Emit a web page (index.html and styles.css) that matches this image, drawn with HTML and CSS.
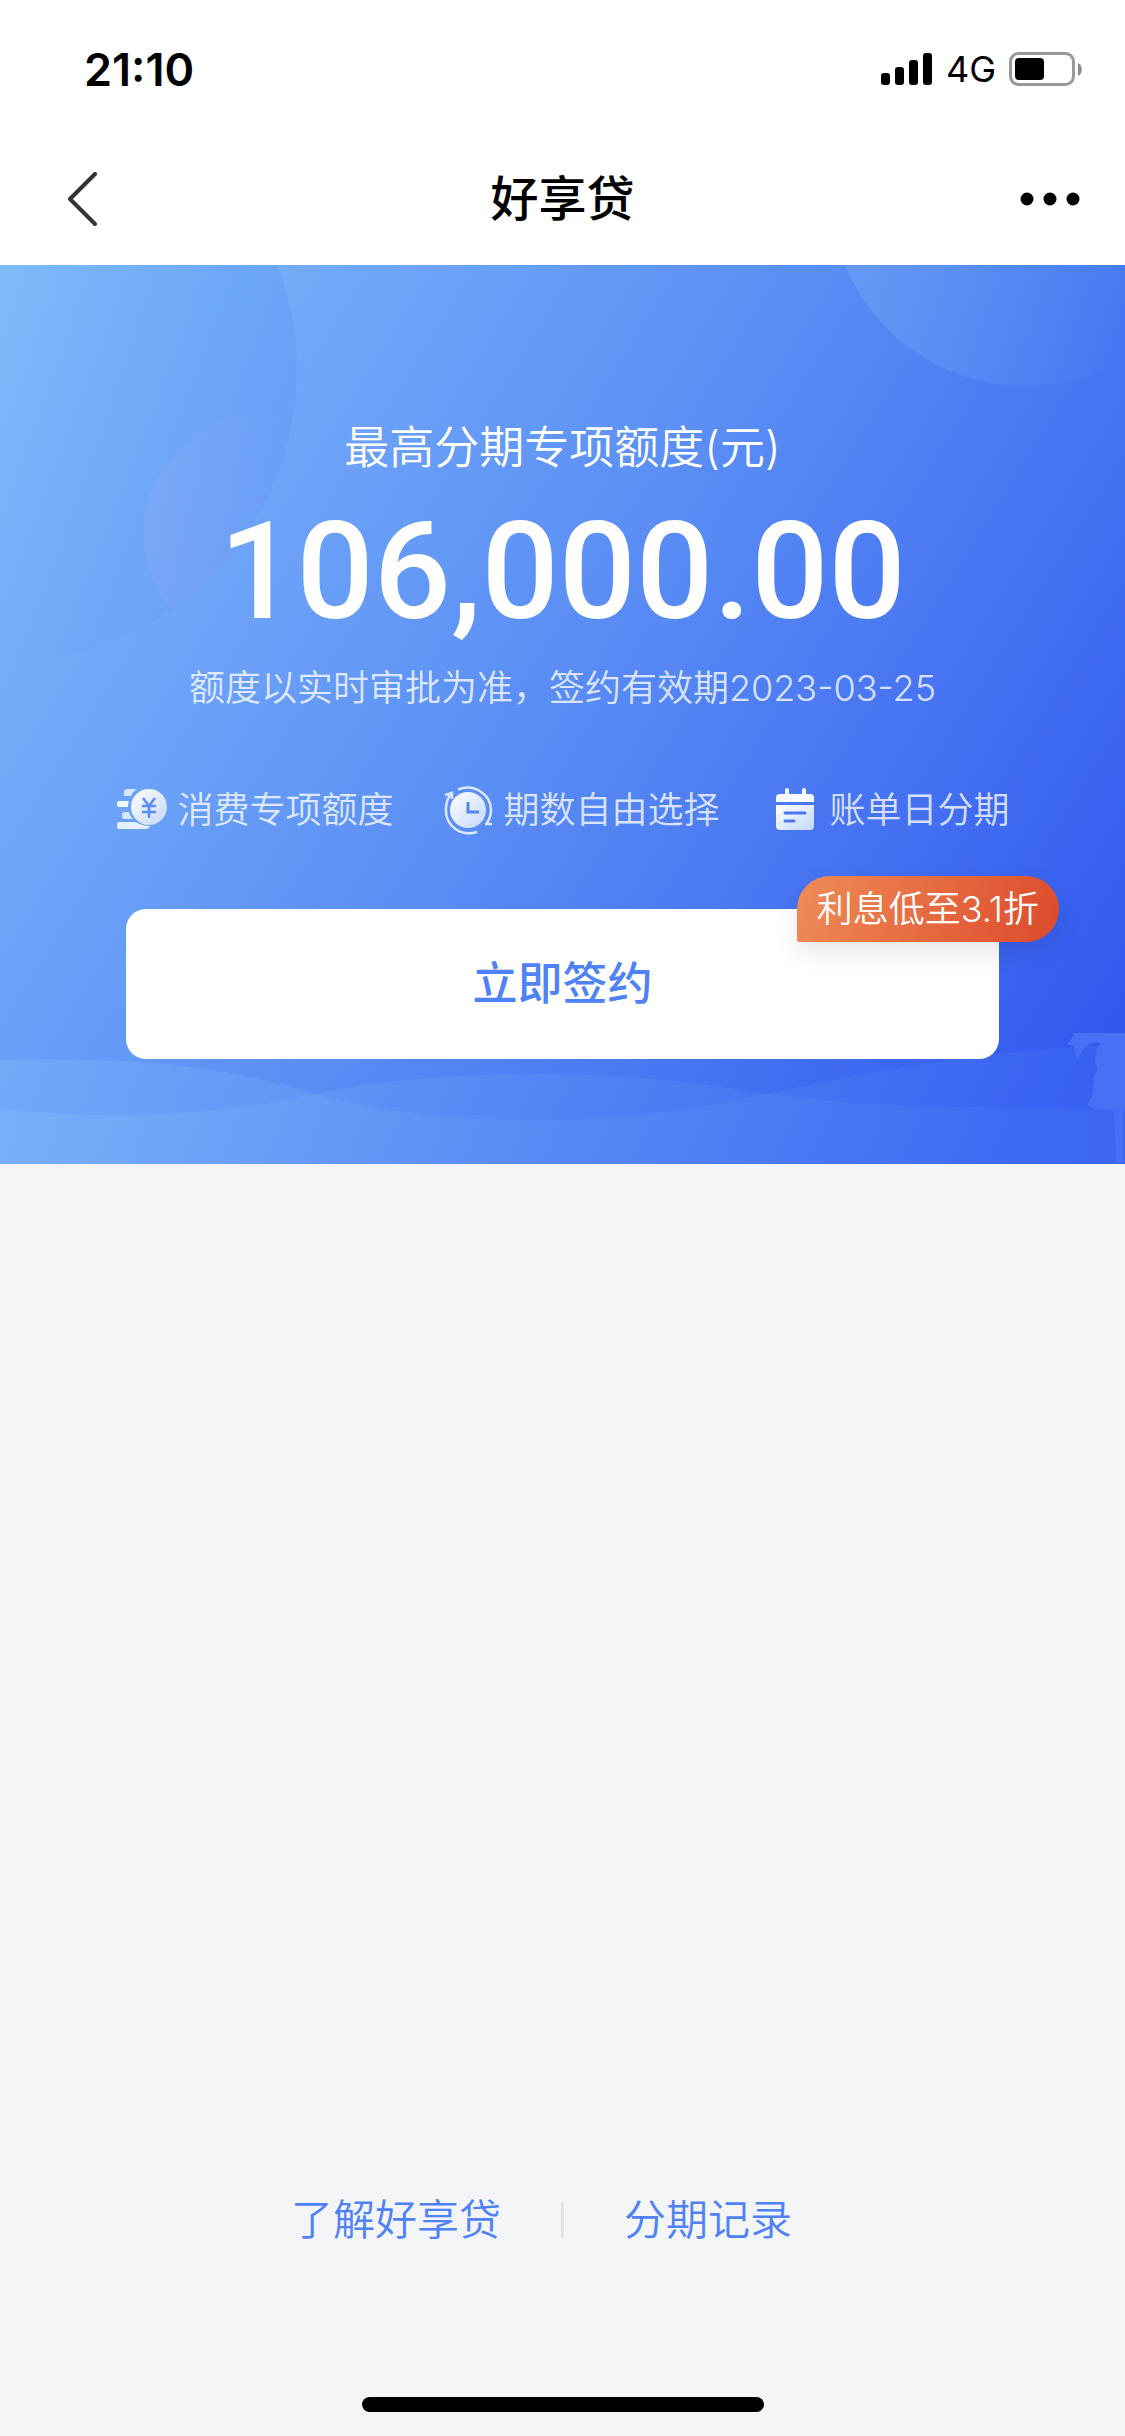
FILE: index.html
```html
<!DOCTYPE html>
<html lang="zh-CN">
<head>
    <meta charset="UTF-8">
    <meta name="viewport" content="width=device-width, initial-scale=1.0">
    <title>好享贷</title>
    <link rel="stylesheet" href="styles.css">
</head>
<body>
    <div class="status-bar">
        <span class="time">21:10</span>
        <div class="status-icons">
            <svg class="signal" viewBox="0 0 52 32" width="52" height="32">
                <rect x="0" y="20" width="9" height="12" rx="3"/>
                <rect x="14" y="14" width="9" height="18" rx="3"/>
                <rect x="28" y="7" width="9" height="25" rx="3"/>
                <rect x="42" y="0" width="9" height="32" rx="3"/>
            </svg>
            <span class="network">4G</span>
            <svg class="battery" viewBox="0 0 74 34" width="74" height="34">
                <rect x="1.5" y="1.5" width="63" height="31" rx="8" fill="none" stroke="#999" stroke-width="3"/>
                <rect x="6" y="6" width="29" height="22" rx="4"/>
                <path d="M69 11c5 2 5 11 0 13z" fill="#8c8c8c"/>
            </svg>
        </div>
    </div>

    <header class="nav-bar">
        <button class="icon-btn back" type="button" aria-label="返回">
            <svg viewBox="0 0 32 54" width="32" height="54">
                <path d="M29 2L4 27l25 25" fill="none" stroke="#333" stroke-width="4" stroke-linecap="round" stroke-linejoin="round"/>
            </svg>
        </button>
        <h1>好享贷</h1>
        <button class="icon-btn" type="button" aria-label="更多">
            <svg viewBox="0 0 60 14" width="60" height="14">
                <circle cx="7" cy="7" r="6.5"/>
                <circle cx="30" cy="7" r="6.5"/>
                <circle cx="53" cy="7" r="6.5"/>
            </svg>
        </button>
    </header>

    <main class="hero">
        <svg class="hero-bg" viewBox="0 0 1125 899" preserveAspectRatio="none" aria-hidden="true">
            <defs>
                <linearGradient id="bigCircle" x1="0" y1="0" x2="1" y2="0">
                    <stop offset="0.5" stop-color="#5a96f4" stop-opacity="0"/>
                    <stop offset="1" stop-color="#5a96f4" stop-opacity="0.35"/>
                </linearGradient>
                <linearGradient id="smallCircle" x1="0" y1="0" x2="1" y2="0">
                    <stop offset="0" stop-color="#92aaf6" stop-opacity="0.3"/>
                    <stop offset="0.7" stop-color="#7a96f6" stop-opacity="0.15"/>
                </linearGradient>
                <linearGradient id="rightCircle" gradientUnits="userSpaceOnUse" x1="840" y1="0" x2="1125" y2="40">
                    <stop offset="0" stop-color="#78b0f4" stop-opacity="0.4"/>
                    <stop offset="1" stop-color="#78b0f4" stop-opacity="0"/>
                </linearGradient>
                <linearGradient id="wave" x1="0" y1="0" x2="1" y2="0">
                    <stop offset="0" stop-color="#94ccfa" stop-opacity="0.22"/>
                    <stop offset="0.5" stop-color="#78b0f8" stop-opacity="0.14"/>
                    <stop offset="1" stop-color="#5c8cff" stop-opacity="0.14"/>
                </linearGradient>
                <clipPath id="bigClip"><circle cx="5" cy="105" r="292"/></clipPath>
            </defs>
            <circle cx="5" cy="105" r="292" fill="url(#bigCircle)"/>
            <circle cx="264" cy="268" r="120" fill="url(#smallCircle)" clip-path="url(#bigClip)"/>
            <circle cx="1025" cy="-73" r="194" fill="url(#rightCircle)"/>
            <path d="M0 795C130 793 215 798 315 829C440 864 620 864 765 829C880 805 950 792 1065 783L1125 779V899H0z" fill="url(#wave)"/>
            <path d="M0 844C110 856 220 850 315 829C440 802 620 802 765 829C880 845 1000 842 1125 844V899H0z" fill="url(#wave)"/>
            <path d="M1074 768h51v76h-2v53h-7l-2-52-19-1-8-4 5-9 2-20 3-6-2-10 2-13 4-3-7-2-7 4-5 5-5 9-3-14-7-2 4-4z" fill="#4771f5"/>
        </svg>

        <p class="quota-label">最高分期专项额度(元)</p>
        <p class="amount">106,000.00</p>
        <p class="notice">额度以实时审批为准，签约有效期2023-03-25</p>

        <ul class="features">
            <li>
                <svg viewBox="0 0 52 52" width="52" height="52">
                    <defs>
                        <linearGradient id="iconFill" x1="0" y1="0" x2="1" y2="1">
                            <stop offset="0" stop-color="#fff"/>
                            <stop offset="1" stop-color="#c4d7fc"/>
                        </linearGradient>
                    </defs>
                    <path d="M12 5h10c-3 2-5 4-6 7H9V8q0-3 3-3z" fill="#d9e7fe"/>
                    <path d="M4 17h10q-1 3-1 6H4q-2 0-2-3t2-3z" fill="#f3f8ff"/>
                    <path d="M9 28h5q1 4 4 7H9q-2 0-2-3.500t2-3.500z" fill="#d9e7fe"/>
                    <path d="M4 38h17q6 4 14 4-1 3-4 3H4q-2 0-2-3.500t2-3.500z" fill="#e6effe"/>
                    <circle cx="34" cy="23" r="18" fill="url(#iconFill)"/>
                    <path d="M28 14l6 8 6-8M34 22v12M27 22h14M27 28h14" fill="none" stroke="#5c8df5" stroke-width="2.500"/>
                </svg>
                <span>消费专项额度</span>
            </li>
            <li>
                <svg viewBox="0 0 52 52" width="52" height="52">
                    <circle cx="27" cy="26" r="18" fill="url(#iconFill)"/>
                    <path d="M17 5.500C34-1 50 11 50 26q0 7-4 13M44 40h7M36 48C20 53 4 42 5 25Q5 16 10 10M4 11l7-2v6" fill="none" stroke="#dce8fe" stroke-width="2.500"/>
                    <path d="M27 18v10h11" fill="none" stroke="#5485f4" stroke-width="3"/>
                </svg>
                <span>期数自由选择</span>
            </li>
            <li>
                <svg viewBox="0 0 52 52" width="52" height="52">
                    <path d="M12 10h5V7q0-3 2-3t2 3v3h13V7q0-3 2-3t2 3v3h4q4 0 4 4v4H8v-4q0-4 4-4z" fill="#f7faff"/>
                    <path d="M8 21h38v21q0 4-4 4H12q-4 0-4-4z" fill="url(#iconFill)"/>
                    <path d="M17 29h20M17 37h9" stroke="#4a77ee" stroke-width="3" stroke-linecap="round"/>
                </svg>
                <span>账单日分期</span>
            </li>
        </ul>

        <div class="sign">
            <button class="sign-btn" type="button">立即签约</button>
            <span class="badge">利息低至3.1折</span>
        </div>
    </main>

    <footer>
        <nav class="links">
            <a href="#about">了解好享贷</a>
            <span class="divider"></span>
            <a href="#records">分期记录</a>
        </nav>
        <div class="home-indicator"></div>
    </footer>
</body>
</html>
```
FILE: styles.css
```css
* { box-sizing: border-box; }
body {
    display: flex;
    flex-direction: column;
    min-height: 100vh;
    margin: 0;
    font-family: Inter, "Noto Sans CJK SC", sans-serif;
    font-size: 36px;
    background: #f3f5f7;
    color: #000;
}
h1, p, ul { margin: 0; }
svg { display: block; flex: none; }
button {
    padding: 0;
    border: none;
    background: none;
    font-family: inherit;
    cursor: pointer;
}

/* Top bars */
.status-bar {
    display: flex;
    justify-content: space-between;
    align-items: center;
    height: 132px;
    padding: 6px 42px 0 84px;
    background: #fff;
}
.time { font-size: 45px; font-weight: 600; }
.status-icons {
    display: flex;
    align-items: center;
    gap: 13px;
}
.nav-bar {
    display: flex;
    justify-content: space-between;
    align-items: center;
    height: 133px;
    padding: 0 45px;
    background: #fff;
}
.nav-bar h1 {
    font-size: 48px;
    font-weight: 500;
    line-height: 60px;
}
.icon-btn {
    display: flex;
    width: 60px;
}
.back { padding-left: 21px; }

/* Quota panel */
.hero {
    position: relative;
    display: flex;
    flex-direction: column;
    align-items: center;
    padding: 153px 0 105px;
    background: linear-gradient(122deg, #80bbfa 0%, #6ea5f8 24%, #5b8ff5 47%, #4673f2 72%, #3259ef 94%);
    color: #fff;
    overflow: hidden;
}
.hero-bg {
    position: absolute;
    top: 0;
    left: 0;
    width: 100%;
    height: 100%;
}
.quota-label, .amount, .notice, .features, .sign { position: relative; }
.quota-label {
    font-size: 45px;
    font-weight: 350;
    line-height: 60px;
}
.amount {
    font-family: Roboto, sans-serif;
    font-size: 136px;
    font-weight: 500;
    line-height: 188px;
}
.notice {
    font-weight: 350;
    line-height: 44px;
    color: rgba(255, 255, 255, 0.8);
}
.features {
    display: flex;
    gap: 48px;
    margin-top: 74px;
    padding: 0;
    list-style: none;
    color: rgba(255, 255, 255, 0.8);
}
.features li {
    display: flex;
    align-items: center;
    gap: 10px;
    font-weight: 350;
    line-height: 52px;
}
.sign {
    align-self: stretch;
    margin: 73px 126px 0;
}
.sign-btn {
    display: block;
    width: 100%;
    height: 150px;
    border-radius: 20px;
    background: #fff;
    color: #4f81f7;
    font-size: 45px;
    font-weight: 500;
    line-height: 60px;
}
.badge {
    position: absolute;
    top: -33px;
    right: -60px;
    padding: 0 20px;
    border-radius: 33px 33px 33px 2px;
    background: linear-gradient(110deg, #f08c57, #dc4a2b);
    box-shadow: 0 10px 24px rgba(0, 0, 0, 0.1);
    font-weight: 350;
    line-height: 66px;
}

/* Bottom links */
footer { margin-top: auto; }
.links {
    display: grid;
    grid-template-columns: 1fr auto 1fr;
    align-items: center;
    gap: 60px;
    line-height: 60px;
}
.links a {
    color: #4f81f7;
    font-size: 42px;
    font-weight: 350;
    text-decoration: none;
}
.links a:first-child { justify-self: end; }
.divider {
    width: 3px;
    height: 36px;
    background: #e3e5e8;
}
.home-indicator {
    width: 402px;
    height: 15px;
    margin: 147px auto 24px;
    border-radius: 8px;
    background: #000;
}
```
